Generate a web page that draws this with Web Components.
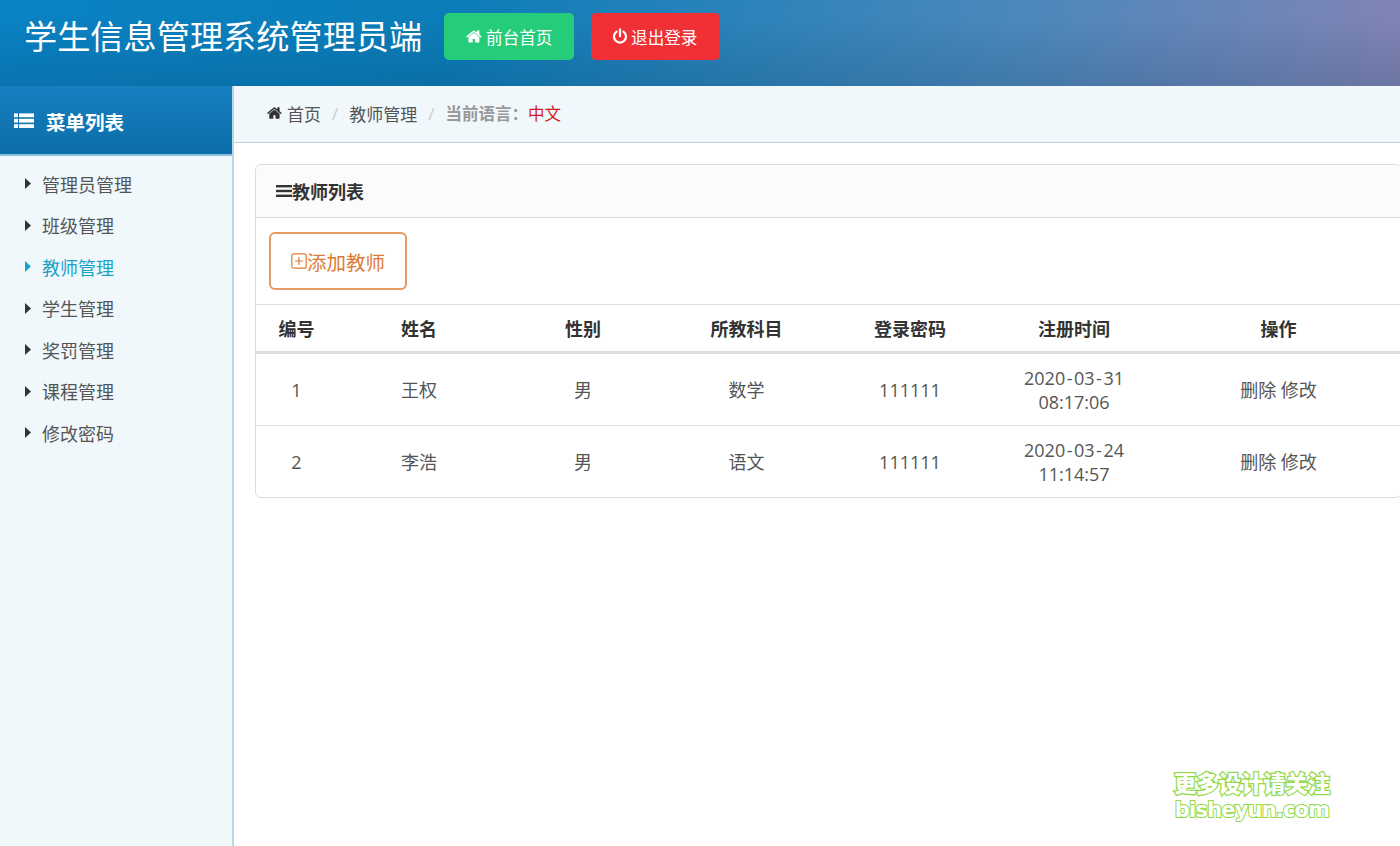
<!DOCTYPE html>
<html lang="zh">
<head>
<meta charset="utf-8">
<title>学生信息管理系统管理员端</title>
<style>
    html, body { margin: 0; height: 100%; overflow: hidden; background: #fff; }
    body { font-family: "Open Sans", "Noto Sans CJK SC", sans-serif; font-size: 18px; color: #555; }
    #page { display: flex; flex-direction: column; height: 846px; width: 1400px; position: relative; overflow: hidden; }
    #middle { display: flex; flex: 1; min-height: 0; }
    #content { flex: 1; min-width: 0; display: flex; flex-direction: column; }
</style>
</head>
<body>
<div id="page">
    <app-header>
        <span slot="title">学生信息管理系统管理员端</span>
        <head-button color="#25cd7b" icon="home">前台首页</head-button>
        <head-button color="#f03035" icon="power" style="width:129px;padding-right:2px">退出登录</head-button>
    </app-header>
    <div id="middle">
        <side-menu>
            <menu-item>管理员管理</menu-item>
            <menu-item>班级管理</menu-item>
            <menu-item active>教师管理</menu-item>
            <menu-item>学生管理</menu-item>
            <menu-item>奖罚管理</menu-item>
            <menu-item>课程管理</menu-item>
            <menu-item>修改密码</menu-item>
        </side-menu>
        <div id="content">
            <bread-crumb></bread-crumb>
            <teacher-card></teacher-card>
        </div>
    </div>
    <site-mark></site-mark>
</div>

<script>
const HOME_PATH = 'M1408 992v480q0 26-19 45t-45 19h-384v-384h-256v384h-384q-26 0-45-19t-19-45v-480q0-1 .5-3t.5-3l575-474 575 474q1 2 1 6zm223-69l-62 74q-8 9-21 11h-3q-13 0-21-7l-692-577-692 577q-12 8-24 7-13-2-21-11l-62-74q-8-10-7-23.5t11-21.5l719-599q32-26 76-26t76 26l244 204v-195q0-14 9-23t23-9h192q14 0 23 9t9 23v408l219 182q10 8 11 21.5t-7 23.5z';

class AppHeader extends HTMLElement {
    constructor() {
        super();
        this.attachShadow({ mode: 'open' });
        this.shadowRoot.innerHTML = `
            <style>
                :host {
                    display: flex;
                    flex: none;
                    height: 86px;
                    box-sizing: border-box;
                    padding: 13px 0 0 24px;
                    gap: 17px;
                    color: #fff;
                    background:
                        linear-gradient(to bottom, rgba(0,40,70,0) 20%, rgba(0,40,70,.16) 100%),
                        linear-gradient(100deg, #0a82c4 0%, #0b7db8 32%, #4b88bc 72%, #8284b4 100%);
                }
                .title { font-size: 33.2px; line-height: 47px; margin-right: 5px; white-space: nowrap; }
                .btns { display: flex; gap: 17px; align-items: flex-start; }
            </style>
            <div class="title"><slot name="title"></slot></div>
            <div class="btns"><slot></slot></div>
        `;
    }
}

class HeadButton extends HTMLElement {
    constructor() {
        super();
        this.attachShadow({ mode: 'open' });
        const icon = this.getAttribute('icon') === 'home'
            ? `<svg width="17" height="17" viewBox="0 0 1792 1792" fill="#fff"><path d="${HOME_PATH}"/></svg>`
            : `<svg width="16" height="17" viewBox="0 0 16 17" fill="none" stroke="#fff" stroke-width="2.2" stroke-linecap="round"><path d="M4.6 3.6a6 6 0 1 0 6.8 0"/><path d="M8 1.4v6.8"/></svg>`;
        this.shadowRoot.innerHTML = `
            <style>
                :host {
                    display: flex;
                    box-sizing: border-box;
                    align-items: center;
                    justify-content: center;
                    gap: 3px;
                    height: 47px;
                    width: 130px;
                    border-radius: 5px;
                    font-size: 16.6px;
                    color: #fff;
                    background: ${this.getAttribute('color')};
                }
                svg { display: block; }
            </style>
            ${icon}<slot></slot>
        `;
    }
}

class SideMenu extends HTMLElement {
    constructor() {
        super();
        this.attachShadow({ mode: 'open' });
        this.shadowRoot.innerHTML = `
            <style>
                :host {
                    display: block;
                    flex: none;
                    width: 232px;
                    background: #f0f8fc;
                    border-right: 2px solid #b9d6e4;
                }
                .top {
                    display: flex;
                    align-items: center;
                    gap: 12px;
                    box-sizing: border-box;
                    height: 70px;
                    padding: 2px 0 0 14px;
                    color: #fff;
                    font-size: 19.5px;
                    font-weight: 700;
                    background: linear-gradient(to bottom, #167fc0, #0c6ea8);
                    border-bottom: 2px solid #8cc3dc;
                }
                .list { padding-top: 7px; }
            </style>
            <div class="top">
                <svg width="20" height="16" viewBox="0 0 20 16" fill="#fff">
                    <rect x="0" y="0.4" width="4" height="3.8"/><rect x="5" y="0.4" width="15" height="3.8"/>
                    <rect x="0" y="5.8" width="4" height="3.8"/><rect x="5" y="5.8" width="15" height="3.8"/>
                    <rect x="0" y="11.2" width="4" height="3.8"/><rect x="5" y="11.2" width="15" height="3.8"/>
                </svg>
                <span>菜单列表</span>
            </div>
            <div class="list"><slot></slot></div>
        `;
    }
}

class MenuItem extends HTMLElement {
    constructor() {
        super();
        this.attachShadow({ mode: 'open' });
        this.shadowRoot.innerHTML = `
            <style>
                :host {
                    display: flex;
                    align-items: center;
                    height: 41.5px;
                    padding-left: 25px;
                    gap: 11px;
                    font-size: 18px;
                    color: #555;
                }
                :host([active]) { color: #1aa3c8; }
                svg { flex: none; }
            </style>
            <svg width="6" height="11" viewBox="0 0 6 11"><path d="M0 0l6 5.5-6 5.5z" fill="${this.hasAttribute('active') ? '#1aa3c8' : '#333'}"/></svg>
            <span><slot></slot></span>
        `;
    }
}

class BreadCrumb extends HTMLElement {
    constructor() {
        super();
        this.attachShadow({ mode: 'open' });
        this.shadowRoot.innerHTML = `
            <style>
                :host {
                    display: flex;
                    flex: none;
                    align-items: center;
                    height: 57px;
                    box-sizing: border-box;
                    padding: 0 0 2px 33px;
                    font-size: 17px;
                    color: #555;
                    background: #f0f8fc;
                    border-bottom: 1px solid #bdd3db;
                }
                svg { margin-right: 4px; }
                .sep { color: #ccc; margin: 0 11px; }
                .cur { color: #999; font-weight: 700; font-size: 16.5px; }
                .lang { color: #cf1b1f; font-size: 16.5px; }
            </style>
            <svg width="16" height="16" viewBox="0 0 1792 1792" fill="#333"><path d="${HOME_PATH}"/></svg>
            <span>首页</span><span class="sep">/</span>
            <span>教师管理</span><span class="sep">/</span>
            <span class="cur">当前语言：</span><span class="lang">中文</span>
        `;
    }
}

class TeacherCard extends HTMLElement {
    constructor() {
        super();
        this.attachShadow({ mode: 'open' });
        const date = (d) => d.replace(/-/g, '<span class="dash">-</span>');
        const rows = [
            ['1', '王权', '男', '数学', '111111', date('2020-03-31') + '<br>08:17:06'],
            ['2', '李浩', '男', '语文', '111111', date('2020-03-24') + '<br>11:14:57']
        ];
        const heads = ['编号', '姓名', '性别', '所教科目', '登录密码', '注册时间', '操作'];
        this.shadowRoot.innerHTML = `
            <style>
                :host {
                    display: block;
                    width: 1147px;
                    margin: 21px 0 0 21px;
                    box-sizing: border-box;
                    border: 1px solid #dcdcdc;
                    border-radius: 6px;
                    color: #555;
                }
                .title {
                    display: flex;
                    align-items: center;
                    height: 52px;
                    padding-left: 20px;
                    font-size: 18px;
                    font-weight: 700;
                    color: #333;
                    background: #fbfbfb;
                    border-bottom: 1px solid #dfdfdf;
                    border-radius: 6px 6px 0 0;
                }
                .tools { height: 87px; box-sizing: border-box; padding: 14px 0 0 13px; border-bottom: 1px solid #dfdfdf; }
                .add {
                    display: inline-flex;
                    align-items: center;
                    justify-content: center;
                    box-sizing: border-box;
                    width: 138px;
                    height: 58px;
                    font-size: 19.5px;
                    color: #de7a34;
                    border: 2px solid #e59a63;
                    border-radius: 6px;
                }
                table { width: 100%; border-collapse: collapse; table-layout: fixed; font-size: 18px; }
                th { height: 46px; padding: 0; color: #333; font-weight: 700; border-bottom: 3px solid #dedede; }
                td { height: 71px; padding: 0; text-align: center; line-height: 24px; }
                tr + tr td { border-top: 1px solid #dfdfdf; }
                .dash { padding: 0 1.5px; }
            </style>
            <div class="title">
                <svg width="16" height="12" viewBox="0 0 16 12" fill="#333"><rect y="0" width="16" height="2.4"/><rect y="4.8" width="16" height="2.4"/><rect y="9.6" width="16" height="2.4"/></svg>
                <span>教师列表</span>
            </div>
            <div class="tools">
                <span class="add">
                    <svg width="16" height="16" viewBox="0 0 16 16" fill="none" stroke="#de7a34" stroke-width="1.2"><rect x=".8" y=".8" width="14.4" height="14.4" rx="2"/><path d="M4 8h8M8 4v8"/></svg>
                    <span>添加教师</span>
                </span>
            </div>
            <table>
                <colgroup><col style="width:81px"><col style="width:164px"><col style="width:164px"><col style="width:163px"><col style="width:164px"><col style="width:164px"><col></colgroup>
                <thead><tr>${heads.map(h => `<th>${h}</th>`).join('')}</tr></thead>
                <tbody>
                    ${rows.map(r => `<tr>${r.map(c => `<td>${c}</td>`).join('')}<td>删除 修改</td></tr>`).join('')}
                </tbody>
            </table>
        `;
    }
}

class SiteMark extends HTMLElement {
    constructor() {
        super();
        this.attachShadow({ mode: 'open' });
        this.shadowRoot.innerHTML = `
            <style>
                :host {
                    position: absolute;
                    left: 1174px;
                    top: 768px;
                    width: 156px;
                    color: #fff;
                    font-weight: 900;
                    text-align: center;
                    white-space: nowrap;
                    -webkit-text-stroke: 2.5px #93d94a;
                    paint-order: stroke fill;
                }
                div { line-height: 28px; }
                .cn { font-family: "Noto Sans CJK SC", sans-serif; font-size: 22.3px; }
                .en { font-family: "DejaVu Sans", sans-serif; font-size: 20.8px; letter-spacing: -0.7px; line-height: 28px; -webkit-text-stroke-width: 2px; }
            </style>
            <div class="cn">更多设计请关注</div>
            <div class="en">bisheyun.com</div>
        `;
    }
}

customElements.define('app-header', AppHeader);
customElements.define('head-button', HeadButton);
customElements.define('side-menu', SideMenu);
customElements.define('menu-item', MenuItem);
customElements.define('bread-crumb', BreadCrumb);
customElements.define('teacher-card', TeacherCard);
customElements.define('site-mark', SiteMark);
</script>
</body>
</html>
